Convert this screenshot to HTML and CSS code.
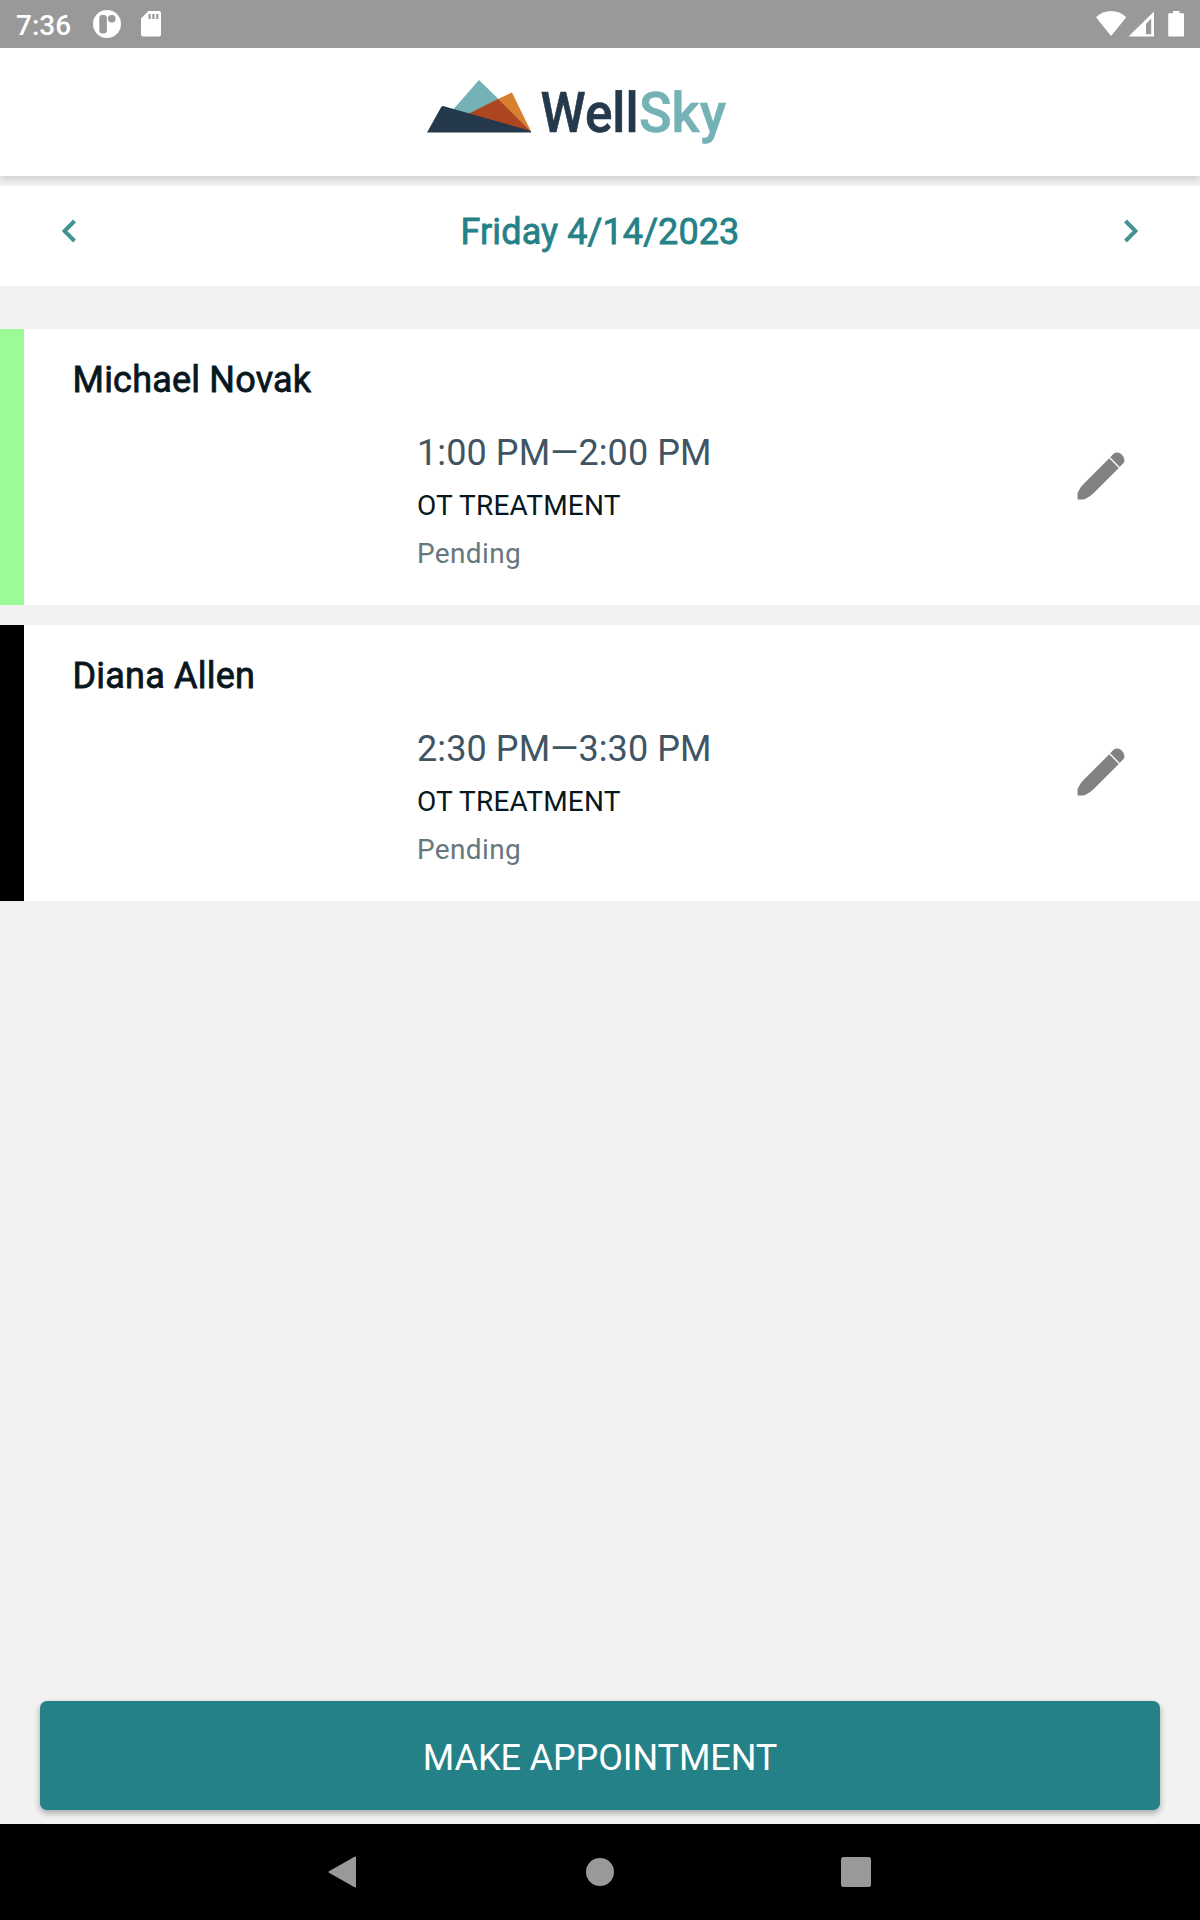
FILE: index.html
```html
<!DOCTYPE html>
<html lang="en">
<head>
<meta charset="utf-8">
<title>WellSky Appointments</title>
<link rel="stylesheet" href="styles.css">
</head>
<body>
<div class="screen">
  <div class="status">
    <span class="clock">7:36</span>
    <svg class="ic-app" width="28" height="28" viewBox="0 0 28 28"><circle cx="14" cy="14" r="14" fill="#fff"/><rect x="6.3" y="5" width="7.6" height="18.4" rx="3" fill="#999"/><rect x="15" y="5" width="7.5" height="7.4" rx="3.4" fill="#999"/></svg>
    <svg class="ic-sd" width="20" height="26" viewBox="0 0 20 26"><path d="M7.5 0H18a2 2 0 0 1 2 2V23.500a2 2 0 0 1-2 2H2a2 2 0 0 1-2-2V7.500Z" fill="#fff"/><path d="M7.500 3h2.200v5H7.500ZM11.300 3h2.200v5h-2.200ZM15.200 3h2.200v5h-2.200Z" fill="#999"/></svg>
    <svg class="ic-right" width="90" height="28" viewBox="0 0 90 28"><path d="M0 7.200C8.500-1.200 21.700-1.200 30.200 7.200L15.100 26Z" fill="#fff"/><path fill-rule="evenodd" d="M58 1.500V26.500H32.500ZM50 14V24.200H55.200V8.500Z" fill="#fff"/><path d="M77 1h6.500v2.200H87a1 1 0 0 1 1 1V25.500a1 1 0 0 1-1 1H73.200a1 1 0 0 1-1-1V4.200a1 1 0 0 1 1-1H77Z" fill="#fff"/></svg>
  </div>
  <header class="header">
    <svg class="logo" width="304" height="72" viewBox="0 0 304 72" role="img" aria-label="WellSky">
      <path d="M53 2 73 21.500 44 38 25 34Z" fill="#74b2b6"/>
      <path d="M86 14.500 105 53.500 72 22Z" fill="#d97f30"/>
      <path d="M86 14.500 71.500 21.200 79 28.500Z" fill="#d97f30"/>
      <path d="M72 21 105 53.500V54L42 39V36Z" fill="#ad4520"/>
      <path d="M15.500 28.500 17 28 105 53V54.500H1Z" fill="#24394b"/>
      <text class="logo-text" x="114.500" y="54" textLength="98" lengthAdjust="spacingAndGlyphs" fill="#24394b" stroke="#24394b">Well</text>
      <text class="logo-text" x="213" y="54" textLength="87" lengthAdjust="spacingAndGlyphs" fill="#74b2b6" stroke="#74b2b6">Sky</text>
    </svg>
  </header>
  <nav class="datebar">
    <svg width="16" height="24" viewBox="0 0 16 24"><path d="M12.500 2 2.500 12l10 10" class="chev"/></svg>
    <h1 class="date">Friday 4/14/2023</h1>
    <svg width="16" height="24" viewBox="0 0 16 24"><path d="M3.500 2l10 10-10 10" class="chev"/></svg>
  </nav>
  <main class="list">
    <article class="card green">
      <h2 class="name">Michael Novak</h2>
      <div class="row">
        <div class="details">
          <div class="time">1:00 PM—2:00 PM</div>
          <div class="type">OT TREATMENT</div>
          <div class="state">Pending</div>
        </div>
        <svg class="pencil" width="48" height="48" viewBox="0 0 48 48"><path d="M32.300 6.300 41.800 16 16.500 41.200Q13 44.700 9 46.500Q7.500 47.400 5.500 47.500H.5V42.500Q.5 41 1.300 39.500 3.200 35 7 31.500ZM33.200 5.200 36.500 1.800Q38 .5 39.800.5 43 .6 45 2.800 47.500 5.300 47.500 8.300 47.500 9.800 46.300 11.200L42.700 14.900Z" fill="#828282"/></svg>
      </div>
    </article>
    <article class="card black">
      <h2 class="name">Diana Allen</h2>
      <div class="row">
        <div class="details">
          <div class="time">2:30 PM—3:30 PM</div>
          <div class="type">OT TREATMENT</div>
          <div class="state">Pending</div>
        </div>
        <svg class="pencil" width="48" height="48" viewBox="0 0 48 48"><path d="M32.300 6.300 41.800 16 16.500 41.200Q13 44.700 9 46.500Q7.500 47.400 5.500 47.500H.5V42.500Q.5 41 1.300 39.500 3.200 35 7 31.500ZM33.200 5.200 36.500 1.800Q38 .5 39.800.5 43 .6 45 2.800 47.500 5.300 47.500 8.300 47.500 9.800 46.300 11.200L42.700 14.900Z" fill="#828282"/></svg>
      </div>
    </article>
  </main>
  <div class="footer"><button class="make">MAKE APPOINTMENT</button></div>
  <div class="sysnav">
    <svg width="30" height="32" viewBox="0 0 30 32"><path d="M1.500 16 27 1.500V30.500Z" fill="#999" stroke="#999" stroke-width="2" stroke-linejoin="round"/></svg>
    <svg width="28" height="28" viewBox="0 0 28 28"><circle cx="14" cy="14" r="14" fill="#999"/></svg>
    <svg width="30" height="30" viewBox="0 0 30 30"><rect width="30" height="30" rx="2.500" fill="#999"/></svg>
  </div>
</div>
</body>
</html>
```
FILE: styles.css
```css
* { box-sizing: border-box; margin: 0; }
body { font-family: Roboto, "Liberation Sans", sans-serif; background: #f2f2f2; }
svg { display: block; flex: none; }
.screen { width: 1200px; height: 1920px; display: flex; flex-direction: column; }
.status { height: 48px; background: #999; display: flex; align-items: center; padding: 0 14px 0 16px; flex: none; position: relative; z-index: 1; }
.clock { width: 77px; color: #fff; font-size: 28px; font-weight: 500; line-height: 32px; padding-top: 3px; }
.ic-app { margin-right: 20px; }
.ic-sd { margin-right: auto; }
.header { height: 128px; background: #fff; box-shadow: 0 2px 9px rgba(0,0,0,.2); padding: 30px 0 0 426px; flex: none; }
.logo-text { font-size: 55px; font-weight: 500; stroke-width: .6px; }
.datebar { height: 100px; margin-top: 10px; background: #fff; display: flex; justify-content: space-between; padding: 33px 62px 0 62px; flex: none; }
.chev { fill: none; stroke: #43928f; stroke-width: 4; }
.date { font-size: 36px; line-height: 42px; font-weight: 400; -webkit-text-stroke: .8px; letter-spacing: .1px; color: #248187; margin-top: -8px; }
.list { padding-top: 43px; display: flex; flex-direction: column; gap: 20px; flex: 1; }
.card { height: 276px; background: #fff; border-left: 24px solid; padding: 30px 75px 0 48px; }
.green { border-color: #9bfb98; }
.black { border-color: #000; }
.name { font-size: 36px; line-height: 42px; font-weight: 400; -webkit-text-stroke: .8px; letter-spacing: .2px; color: #08161e; padding-left: .5px; }
.row { display: flex; justify-content: space-between; padding: 31px 0 0 345px; }
.time { font-size: 36px; line-height: 42px; letter-spacing: .1px; color: #405563; }
.type { font-size: 28px; line-height: 34px; letter-spacing: .2px; color: #08161e; margin-top: 15px; }
.state { font-size: 28px; line-height: 34px; letter-spacing: .35px; color: #677780; margin-top: 14px; }
.pencil { margin-top: 20px; }
.footer { padding: 0 40px 14px; flex: none; }
.make { display: block; width: 100%; height: 109px; border: 0; border-radius: 7px; background: #248187; color: #fff; font: 400 36px/42px Roboto, sans-serif; letter-spacing: -.1px; padding: 4px 0 0; box-shadow: 0 3px 6px rgba(0,0,0,.32); }
.sysnav { height: 96px; background: #000; display: flex; align-items: center; justify-content: space-between; padding: 0 329px 0 328px; flex: none; }
```
